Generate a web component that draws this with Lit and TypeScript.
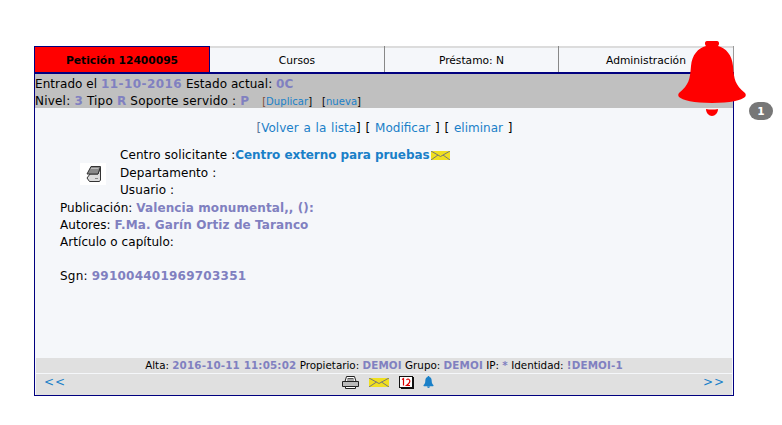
import { LitElement, html, css } from "lit";
import { customElement } from "lit/decorators.js";

@customElement("app-root")
export class AppRoot extends LitElement {
  static styles = css`
    :host { display: block; width: 782px; height: 425px; background: #fff; font-family: "DejaVu Sans", Verdana, sans-serif; color: #000; font-size: 12px; overflow: hidden; }
    .wrap { padding: 46px 0 0 34px; position: relative; }
    .panel { width: 700px; height: 350px; box-sizing: border-box; border: 1px solid #00007f; border-top: 0; background: #f5f7fa; display: flex; flex-direction: column; position: relative; }
    .tabs { display: grid; grid-template-columns: 175px 175px 174px 175px; height: 28px; box-sizing: border-box; border-bottom: 2px solid #00007f; margin: 0 -1px 0 0; background: #f5f7fa; border-top: 2px solid #dcdcdc; }
    .tab { display: flex; align-items: center; justify-content: center; font-size: 10.7px; border-right: 1px solid #888; height: 26px; margin-top: -2px; box-sizing: border-box; padding-top: 2px; }
    .tab.on { background: #f00; font-weight: bold; border-right: 1px solid #00007f; border-top: 1px solid #00007f; }
    .tab:last-child { border-right: 1px solid #999; }
    .info { background: #c0c0c0; height: 34px; padding: 2px 0 0 0; box-sizing: border-box; line-height: 17px; font-size: 12px; white-space: nowrap; letter-spacing: .05px; }
    .row2 { letter-spacing: .2px; }
    b { color: #8080c0; font-weight: bold; letter-spacing: .12px; }
    b.wide { letter-spacing: .42px; }
    a { color: #1a80c8; text-decoration: none; }
    .small { font-size: 10px; margin-left: 9px; letter-spacing: .05px; }
    .small + .small { margin-left: 6px; }
    .br { color: #7a4a3a; }
    .actions { text-align: center; margin-top: 13px; line-height: 14px; font-size: 12px; height: 14px; word-spacing: 1px; padding-left: 1px; }
    .actions .lead { color: #5a7a9a; }
    .content { flex: 1; padding-left: 25px; }
    .req { display: flex; margin-top: 12px; }
    .icon { width: 26px; height: 22px; background: #fff; margin: 16px 0 0 45px; flex: none; display: flex; align-items: center; justify-content: center; }
    .req-lines { margin-left: 14px; line-height: 17.5px; letter-spacing: .08px; }
    .req-lines b { color: #1a80c8; letter-spacing: -.07px; }
    .env { vertical-align: -1px; margin-left: 1px; }
    .lines { line-height: 17px; letter-spacing: .05px; }
    .lines b { letter-spacing: .1px; }
    .sgn { margin-top: 18px; letter-spacing: .2px; }
    .sgn b { letter-spacing: .24px; }
    .meta { background: #e0e0e0; height: 15px; line-height: 15px; text-align: center; font-size: 10.35px; margin: 0 1px 1px 1px; white-space: nowrap; }
    .meta b { letter-spacing: .15px; }
    .nav { background: #e0e0e0; height: 21px; margin: 0 1px; display: flex; align-items: flex-start; justify-content: space-between; padding: 1px 7px 0 8px; box-sizing: border-box; position: relative; }
    .nav a { font-size: 12px; line-height: 14px; letter-spacing: 1px; }
    .tools { display: flex; gap: 10px; position: absolute; left: 306px; top: 2px; align-items: center; height: 13px; }
    .mini-bell { margin-bottom: 2px; margin-left: -1px; }
    .bell { position: absolute; left: 678px; top: 40px; }
    .badge { position: absolute; left: 749px; top: 102px; width: 24px; height: 18px; border-radius: 9px; background: #777; color: #fff; font-size: 10.5px; font-weight: bold; text-align: center; line-height: 18px; }
  `;

  render() {
    return html`<div class="wrap">
      <div class="panel">
        <div class="tabs">
          <div class="tab on">Petición 12400095</div>
          <div class="tab">Cursos</div>
          <div class="tab">Préstamo: N</div>
          <div class="tab">Administración</div>
        </div>
        <div class="info">
          Entrado el <b class="wide">11-10-2016</b> Estado actual: <b>0C</b><br />
          <span class="row2">Nivel: <b>3</b> Tipo <b>R</b> Soporte servido : <b>P</b></span>
          <span class="small"><span class="br">[</span><a>Duplicar</a>]</span>
          <span class="small">[<a>nueva</a>]</span>
        </div>
        <div class="actions"><span class="lead">[</span><a>Volver a la lista</a>] [ <a>Modificar</a> ] [ <a>eliminar</a> ]</div>
        <div class="req">
          <div class="icon">
            <svg width="17" height="18" viewBox="0 0 17 18">
              <path d="M5 9 L13 9 L15.500 2 V15 L14.500 16.500 H4.500 L2 13z" fill="#dcdcdc" stroke="#333" stroke-width="1" />
              <path d="M6 1.500h9.500l-2.500 7.500H2z" fill="#8a8a8a" stroke="#333" stroke-width="1" />
              <path d="M6 3.500h7.500" stroke="#bbb" />
              <rect x="10" y="13" width="3" height="1" fill="#888" />
            </svg>
          </div>
          <div class="req-lines">
            Centro solicitante :<b>Centro externo para pruebas</b><svg class="env" width="19" height="9" viewBox="0 0 19 9"><rect width="19" height="9" fill="#f0e020" /><path d="M0 0l9.500 5.500L19 0M0 9l7-5M19 9l-7-5" fill="none" stroke="#777" /></svg><br />
            Departamento :<br />
            Usuario :
          </div>
        </div>
        <div class="content">
          <div class="lines">
            Publicación: <b>Valencia monumental,, ():</b><br />
            Autores: <b>F.Ma. Garín Ortiz de Taranco</b><br />
            Artículo o capítulo:
          </div>
          <div class="sgn">Sgn: <b>991004401969703351</b></div>
        </div>
        <div class="meta">Alta: <b>2016-10-11 11:05:02</b> Propietario: <b>DEMOI</b> Grupo: <b>DEMOI</b> IP: <b>*</b> Identidad: <b>!DEMOI-1</b></div>
        <div class="nav">
          <a>&lt;&lt;</a>
          <div class="tools">
            <svg width="17" height="13" viewBox="0 0 17 13"><path d="M4.500.5h8l1.500 5H3z" fill="#fff" stroke="#222" /><path d="M.5 5.500h16v5H.5z" fill="#bbb" stroke="#222" /><path d="M3.500 10.500h10v2h-10z" fill="#fff" stroke="#222" /><path d="M5.500 2.500h6M5 4h7" stroke="#555" /></svg>
            <svg width="20" height="9" viewBox="0 0 20 9"><rect width="20" height="9" fill="#f0e020" /><path d="M0 0l10 5.500L20 0M0 9l7.500-5M20 9l-7.500-5" fill="none" stroke="#777" /></svg>
            <svg width="15" height="13" viewBox="0 0 15 13"><rect x=".5" y=".5" width="13" height="11" fill="#fff" stroke="#111" /><path d="M13 1h2v12H2v-1h11z" fill="#111" /><path d="M3 3.500l1.500-1v7" fill="none" stroke="#d00" stroke-width="1.200" /><path d="M7.500 4q1.500-2 3 0t-3 5.500h3.500" fill="none" stroke="#d00" stroke-width="1.200" /></svg>
            <svg class="mini-bell" width="11" height="12" viewBox="0 0 24 26"><path d="M12 0c-1.500 0-2 1-2 2C6 3 5 7 5 11c0 4-1 6-4 9 0 1 0 1 1 2h20c1-1 1-1 1-2-3-3-4-5-4-9 0-4-1-8-5-9 0-1-.5-2-2-2zM9 23c0 2 1 3 3 3s3-1 3-3z" fill="#1a80c8" /></svg>
          </div>
          <a>&gt;&gt;</a>
        </div>
      </div>
      <svg class="bell" width="68" height="77" viewBox="0 0 68 77">
        <path d="M29 1h10c1.500 0 2 1 2 2.500c0 1-.5 2-1 2.500c8 2 14 9 15 20c1 13 2 19 12 27c1 1 1 3 0 4c-3 3-15 6-33 6s-30-3-33-6c-1-1-1-3 0-4c10-8 11-14 12-27c1-11 7-18 15-20c-.5-.5-1-1.500-1-2.500c0-1.500.5-2.500 2-2.500z" fill="#f00"/>
        <path d="M28 69q6 1 12 0c0 4-3 7-6 7s-6-3-6-7z" fill="#f00"/>
      </svg>
      <div class="badge">1</div>
    </div>`;
  }
}
